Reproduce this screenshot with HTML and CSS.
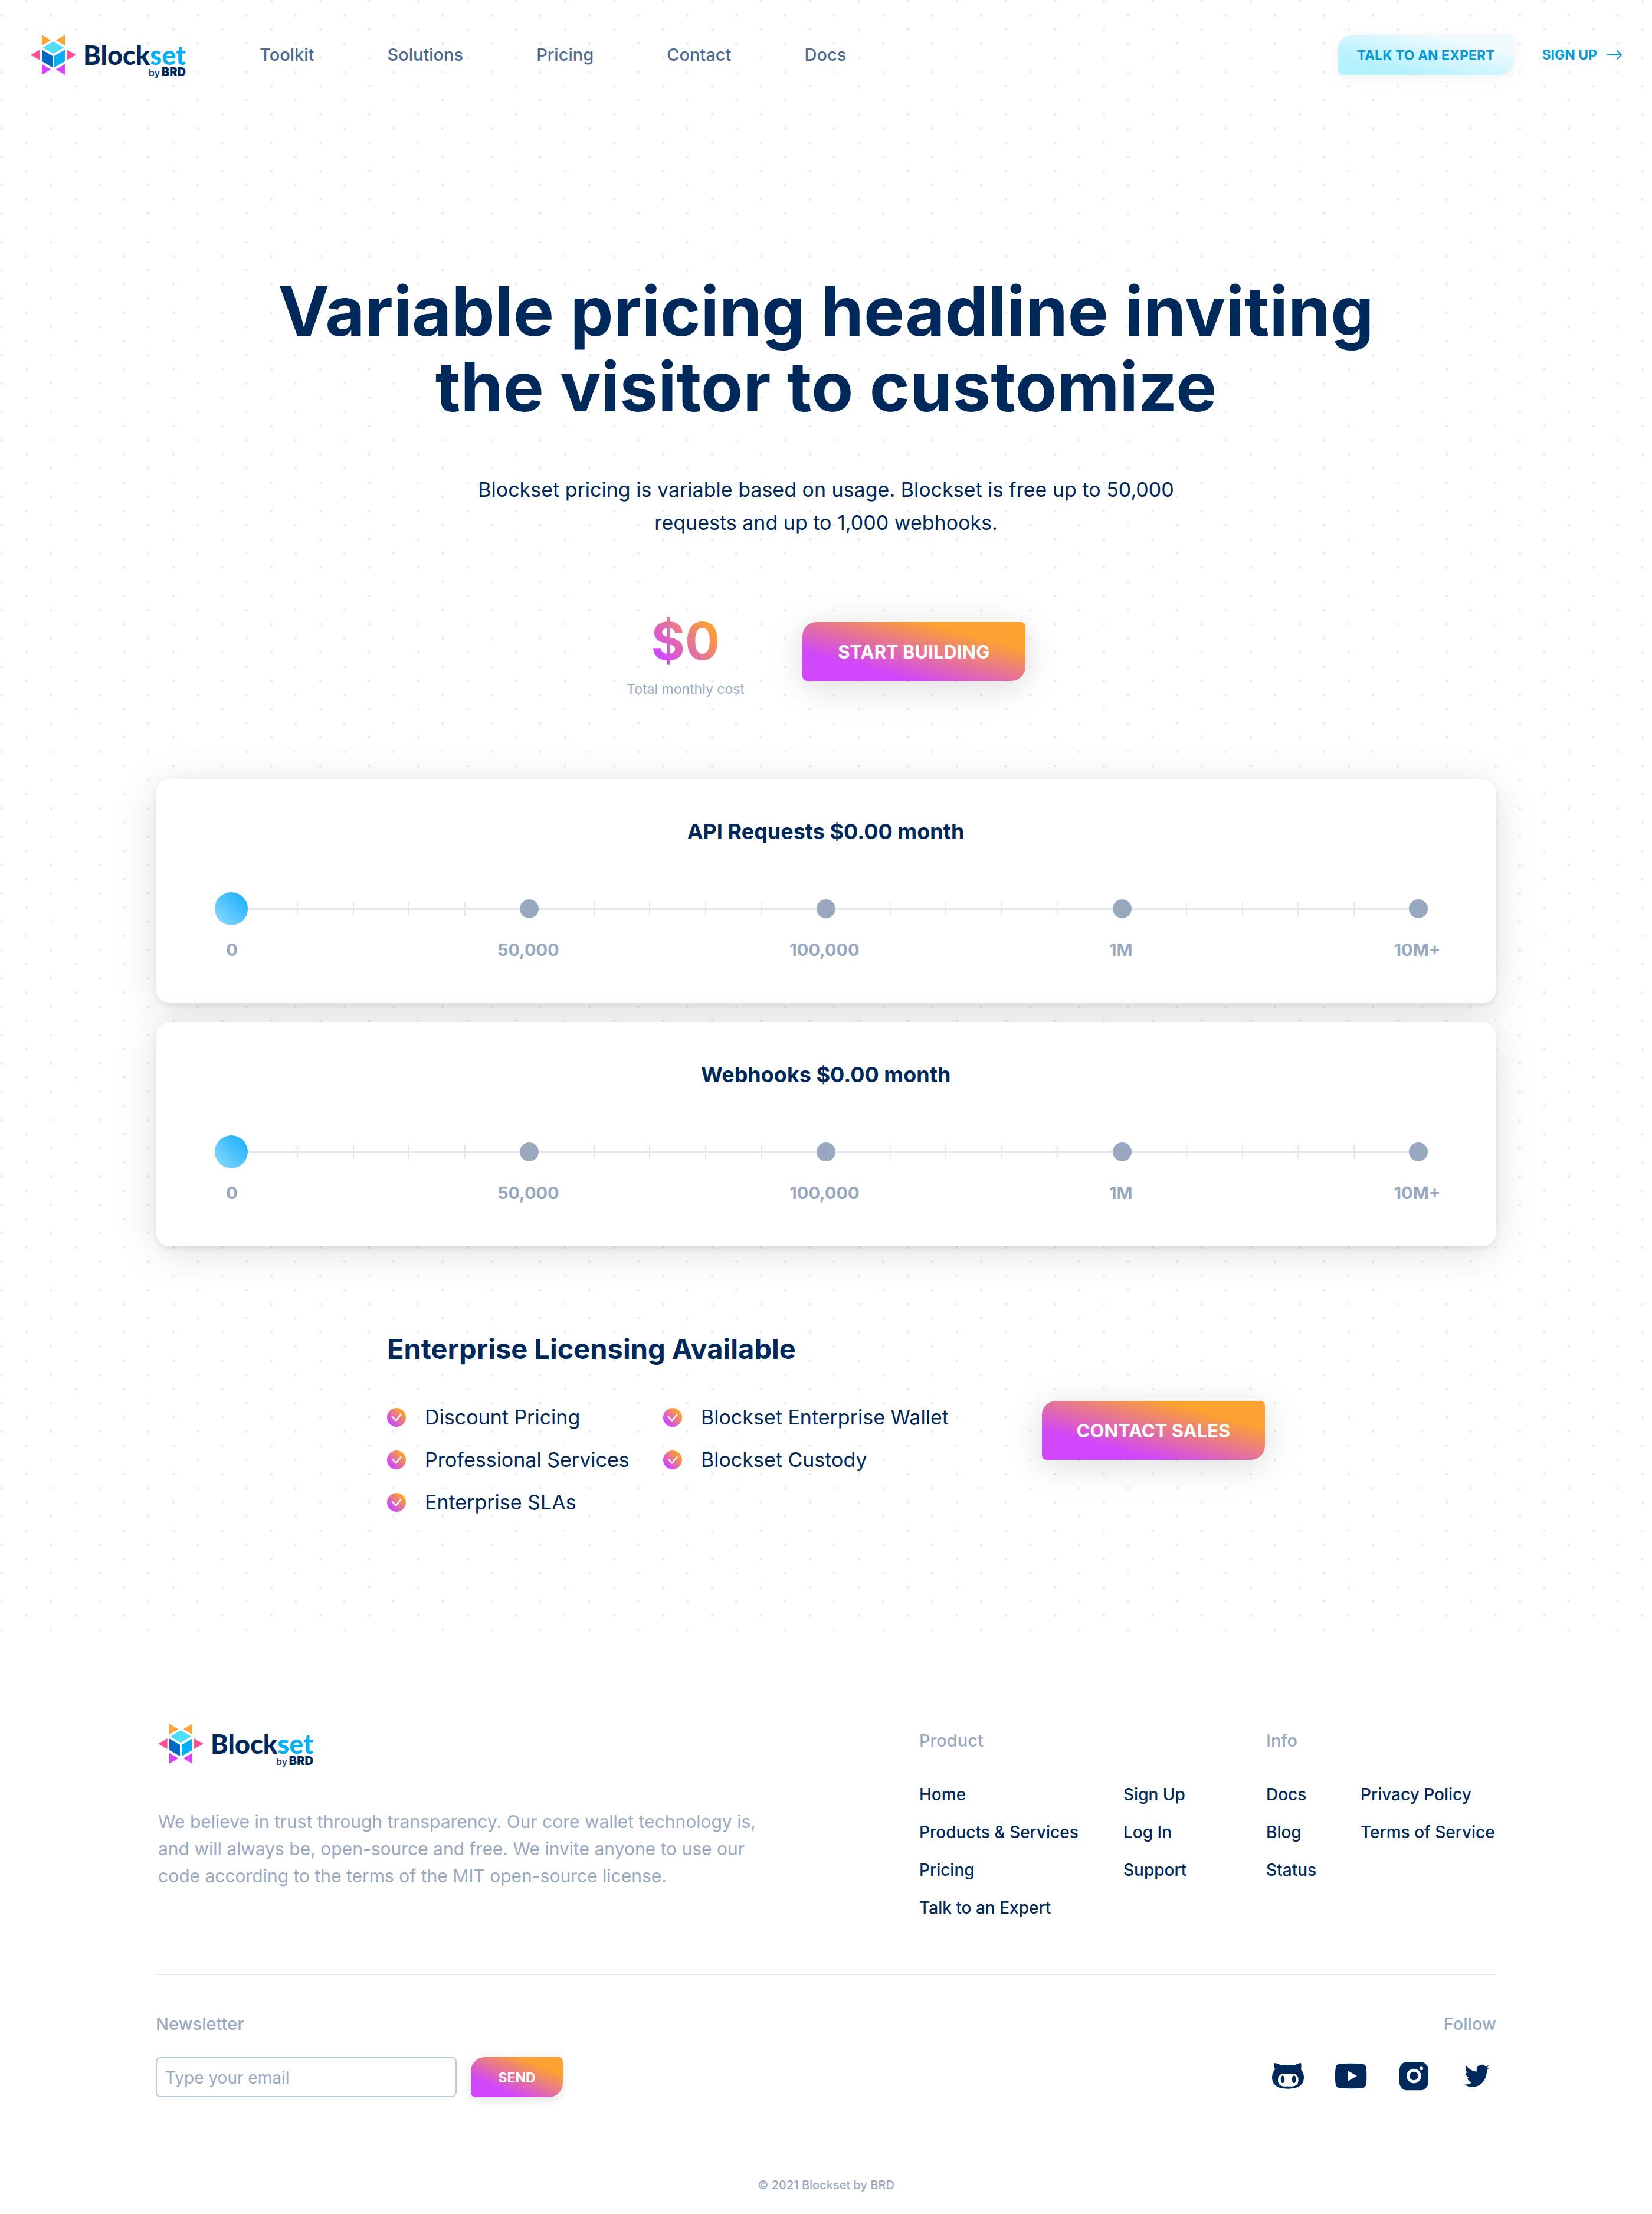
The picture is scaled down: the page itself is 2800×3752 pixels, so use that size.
FILE: index.html
```html
<!DOCTYPE html>
<html lang="en">
<head>
<meta charset="utf-8">
<meta name="viewport" content="width=device-width, initial-scale=1">
<title>Pricing – Blockset by BRD</title>
<link rel="stylesheet" href="styles.css">
</head>
<body>

<svg class="sprite" aria-hidden="true">
  <defs>
    <linearGradient id="warm" x1="0" y1="1" x2="1" y2="0">
      <stop offset=".2" stop-color="#d046fb"/>
      <stop offset=".8" stop-color="#fba231"/>
    </linearGradient>
    <symbol id="mark" viewBox="36 56 231 204">
      <path fill="#fba43a" d="M93 57v54l46-27zM210 57v54l-46-27z"/>
      <path fill="#ff5096" d="M36 158l47-27v54zM267 158l-48-27v54z"/>
      <path fill="#d744ff" d="M93 205v54l46-27zM210 205v54l-46-27z"/>
      <path fill="#4fdcf5" d="M151 90l53 31-53 31-53-31z"/>
      <path fill="#0068c2" d="M93 132l54 31v59l-54-32z"/>
      <path fill="#06aff4" d="M210 132l-54 31v59l54-32z"/>
    </symbol>
    <symbol id="check" viewBox="0 0 32 32">
      <circle cx="16" cy="16" r="16" fill="url(#warm)"/>
      <path d="M9 15l6 6.500 8.500-10.500" fill="none" stroke="#fff" stroke-width="2.500" stroke-linecap="round" stroke-linejoin="round"/>
    </symbol>
  </defs>
</svg>

<div class="canvas">
  <header class="header">
    <a class="logo" href="#" aria-label="Blockset by BRD">
      <svg class="logo-mark" aria-hidden="true"><use href="#mark"/></svg>
      <span class="logo-text">
        <span class="logo-name">Block<span class="logo-accent">set</span></span>
        <span class="logo-by">by<b>BRD</b></span>
      </span>
    </a>
    <nav class="nav" aria-label="Main">
      <a href="#">Toolkit</a>
      <a href="#">Solutions</a>
      <a href="#">Pricing</a>
      <a href="#">Contact</a>
      <a href="#">Docs</a>
    </nav>
    <div class="actions">
      <button class="button button-small button-cool" type="button">TALK TO AN EXPERT</button>
      <a class="signup" href="#">SIGN UP
        <svg class="arrow" viewBox="0 0 26 16" aria-hidden="true"><path d="M1 8h24M18 1l7 7-7 7"/></svg>
      </a>
    </div>
  </header>

  <main>
    <section class="hero">
      <h1>Variable pricing headline inviting the visitor to customize</h1>
      <p class="lead">Blockset pricing is variable based on usage. Blockset is free up to 50,000 requests and up to 1,000 webhooks.</p>
      <div class="quote">
        <div class="total">
          <span class="amount">$0</span>
          <span class="caption">Total monthly cost</span>
        </div>
        <button class="button" type="button">START BUILDING</button>
      </div>
    </section>

    <section class="meters">
      <div class="card">
        <label class="card-title" for="requests">API Requests $0.00 month</label>
        <div class="track">
          <i class="dot"></i><span class="ticks"><i></i><i></i><i></i><i></i></span>
          <i class="dot"></i><span class="ticks"><i></i><i></i><i></i><i></i></span>
          <i class="dot"></i><span class="ticks"><i></i><i></i><i></i><i></i></span>
          <i class="dot"></i><span class="ticks"><i></i><i></i><i></i><i></i></span>
          <i class="dot"></i>
          <input class="range" id="requests" type="range" min="0" max="20" value="0">
        </div>
        <ol class="scale"><li>0</li><li>50,000</li><li>100,000</li><li>1M</li><li>10M+</li></ol>
      </div>
      <div class="card">
        <label class="card-title" for="webhooks">Webhooks $0.00 month</label>
        <div class="track">
          <i class="dot"></i><span class="ticks"><i></i><i></i><i></i><i></i></span>
          <i class="dot"></i><span class="ticks"><i></i><i></i><i></i><i></i></span>
          <i class="dot"></i><span class="ticks"><i></i><i></i><i></i><i></i></span>
          <i class="dot"></i><span class="ticks"><i></i><i></i><i></i><i></i></span>
          <i class="dot"></i>
          <input class="range" id="webhooks" type="range" min="0" max="20" value="0">
        </div>
        <ol class="scale"><li>0</li><li>50,000</li><li>100,000</li><li>1M</li><li>10M+</li></ol>
      </div>
    </section>

    <section class="enterprise">
      <h2>Enterprise Licensing Available</h2>
      <div class="enterprise-row">
        <ul class="features">
          <li><svg aria-hidden="true"><use href="#check"/></svg>Discount Pricing</li>
          <li><svg aria-hidden="true"><use href="#check"/></svg>Professional Services</li>
          <li><svg aria-hidden="true"><use href="#check"/></svg>Enterprise SLAs</li>
        </ul>
        <ul class="features">
          <li><svg aria-hidden="true"><use href="#check"/></svg>Blockset Enterprise Wallet</li>
          <li><svg aria-hidden="true"><use href="#check"/></svg>Blockset Custody</li>
        </ul>
        <button class="button" type="button">CONTACT SALES</button>
      </div>
    </section>
  </main>
</div>

<footer class="footer">
  <div class="footer-top">
    <div class="about">
      <a class="logo" href="#" aria-label="Blockset by BRD">
        <svg class="logo-mark" aria-hidden="true"><use href="#mark"/></svg>
        <span class="logo-text">
          <span class="logo-name">Block<span class="logo-accent">set</span></span>
          <span class="logo-by">by<b>BRD</b></span>
        </span>
      </a>
      <p>We believe in trust through transparency. Our core wallet technology is, and will always be, open-source and free. We invite anyone to use our code according to the terms of the MIT open-source license.</p>
    </div>
    <nav class="links links-product" aria-label="Product">
      <h3>Product</h3>
      <ul>
        <li><a href="#">Home</a></li>
        <li><a href="#">Products &amp; Services</a></li>
        <li><a href="#">Pricing</a></li>
        <li><a href="#">Talk to an Expert</a></li>
      </ul>
      <ul>
        <li><a href="#">Sign Up</a></li>
        <li><a href="#">Log In</a></li>
        <li><a href="#">Support</a></li>
      </ul>
    </nav>
    <nav class="links links-info" aria-label="Info">
      <h3>Info</h3>
      <ul>
        <li><a href="#">Docs</a></li>
        <li><a href="#">Blog</a></li>
        <li><a href="#">Status</a></li>
      </ul>
      <ul>
        <li><a href="#">Privacy Policy</a></li>
        <li><a href="#">Terms of Service</a></li>
      </ul>
    </nav>
  </div>

  <div class="footer-bottom">
    <form class="newsletter">
      <label class="small-title" for="email">Newsletter</label>
      <div class="newsletter-row">
        <input class="email" id="email" type="email" placeholder="Type your email">
        <button class="button button-small button-send" type="button">SEND</button>
      </div>
    </form>
    <div class="follow">
      <h3 class="small-title">Follow</h3>
      <div class="social">
        <a href="#" aria-label="GitHub"><svg viewBox="156 264 192 192">
          <path d="M184 288C195 289 209 294 220 301C240 296 264 296 283 301C294 294 307 289 318 288C320 298 321 308 318 320C328 332 333 345 333 360C333 400 305 419 252 419C199 419 171 400 171 360C171 345 176 332 186 320C182 308 181 298 184 288Z"/>
          <rect class="knock" x="201" y="342" width="104" height="65" rx="29"/>
          <ellipse cx="225" cy="371" rx="10" ry="19"/><ellipse cx="283" cy="371" rx="11" ry="19"/>
        </svg></a>
        <a href="#" aria-label="YouTube"><svg viewBox="477 264 192 192">
          <path d="M572 290Q606 290 632 293Q648 296 650 314Q654 354 650 394Q648 412 632 415Q572 421 512 415Q496 412 494 394Q489 354 494 314Q496 296 512 293Q540 290 572 290Z"/>
          <path class="knock" d="M556 327l47 27-47 27z"/>
        </svg></a>
        <a href="#" aria-label="Instagram"><svg viewBox="798 264 192 192">
          <rect x="819" y="282" width="146" height="145" rx="40"/>
          <circle class="knock" cx="892" cy="354" r="37"/><circle cx="892" cy="354" r="22"/>
          <circle class="knock" cx="930" cy="316" r="9"/>
        </svg></a>
        <a href="#" aria-label="Twitter"><svg viewBox="1119 264 192 192">
          <path transform="translate(1150 283) scale(5.250 5.850)" d="M23.953 4.57a10 10 0 01-2.825.775 4.958 4.958 0 002.163-2.723c-.951.555-2.005.959-3.127 1.184a4.92 4.92 0 00-8.384 4.482C7.69 8.095 4.067 6.13 1.64 3.162a4.822 4.822 0 00-.666 2.475c0 1.71.87 3.213 2.188 4.096a4.904 4.904 0 01-2.228-.616v.06a4.923 4.923 0 003.946 4.827 4.996 4.996 0 01-2.212.085 4.936 4.936 0 004.604 3.417 9.867 9.867 0 01-6.102 2.105c-.39 0-.779-.023-1.17-.067a13.995 13.995 0 007.557 2.209c9.053 0 13.998-7.496 13.998-13.985 0-.21 0-.42-.015-.63A9.935 9.935 0 0024 4.59z"/>
        </svg></a>
      </div>
    </div>
  </div>

  <p class="copyright">© 2021 Blockset by BRD</p>
</footer>

</body>
</html>
```
FILE: styles.css
```css
:root {
  --navy: #00295b;
  --slate: #4d6b92;
  --muted: #98a9bf;
  --line: #e4e8ee;
  --blue: #0499d5;
  --purple: #d046fb;
  --orange: #fba231;
}

* { box-sizing: border-box; }

body {
  margin: 0;
  background: #fff;
  color: var(--navy);
  font-family: Inter, "Liberation Sans", sans-serif;
  font-size: 34px;
}

h1, h2, h3, p, ul, ol { margin: 0; padding: 0; }
ul, ol { list-style: none; }
a { color: inherit; text-decoration: none; }
.sprite { position: absolute; width: 0; height: 0; }

/* Staggered dot grid behind the header and main content */
.canvas {
  padding-bottom: 202px;
  background-image:
    radial-gradient(circle at center, var(--line) 1px, transparent 3px),
    radial-gradient(circle at center, var(--line) 1px, transparent 3px);
  background-size: 83px 48px;
  background-position: calc(50% - 27px) -22px, calc(50% + 14px) 2px;
}

/* Logo */
.logo { display: flex; flex: 0 0 264px; gap: 12px; height: 68px; }
.logo-mark { width: 77px; height: 68px; }
.logo-text { display: flex; flex-direction: column; align-items: flex-end; padding-top: 14px; }
.logo-name { font: 900 45px/40px Lato, sans-serif; }
.logo-accent { color: #06aff4; }
.logo-by { font-size: 16px; line-height: 18px; font-weight: 500; }
.logo-by b { font-size: 20px; font-weight: 900; margin-left: 3px; }

/* Header */
.header { display: flex; align-items: center; padding: 59px 51px 59px 52px; }
.nav { display: flex; gap: 124px; margin-left: 124px; color: var(--slate); font-size: 29px; font-weight: 500; line-height: 36px; }
.actions { display: flex; align-items: center; gap: 48px; margin-left: auto; }
.signup { display: flex; align-items: center; gap: 16px; color: var(--blue); font-size: 23px; font-weight: 700; line-height: 36px; }
.arrow { width: 26px; height: 16px; fill: none; stroke: currentColor; stroke-width: 2; stroke-linecap: round; stroke-linejoin: round; }

/* Buttons */
.button {
  width: 378px;
  height: 100px;
  padding: 2px 0 0;
  border: 0;
  border-radius: 24px 8px;
  background: linear-gradient(to top right, var(--purple) 25%, var(--orange) 77%);
  box-shadow: 0 10px 60px rgba(0, 0, 0, .14);
  color: #fff;
  font: 700 31px/40px Inter, sans-serif;
  cursor: pointer;
}
.button-small { height: 68px; font-size: 23px; line-height: 32px; }
.button-cool {
  width: 298px;
  background: linear-gradient(to top right, #b4f1fd 22%, #effaff 77%);
  box-shadow: 0 4px 24px rgba(0, 0, 0, .05);
  color: var(--blue);
}
.button-send { width: 156px; box-shadow: 0 4px 16px rgba(0, 0, 0, .12); }

/* Hero */
.hero { display: flex; flex-direction: column; align-items: center; padding-top: 277px; text-align: center; }
h1 { max-width: 1960px; font-size: 116px; font-weight: 700; line-height: 128px; }
.lead { max-width: 1240px; margin-top: 83px; line-height: 56px; }
.quote { display: flex; align-items: center; gap: 98px; margin-top: 112px; }
.total { display: flex; flex-direction: column; align-items: center; gap: 8px; }
.amount {
  background: linear-gradient(to top right, var(--purple) 20%, var(--orange) 80%);
  -webkit-background-clip: text;
  background-clip: text;
  color: transparent;
  font-size: 88px;
  font-weight: 700;
  line-height: 120px;
}
.caption { color: var(--muted); font-size: 23px; line-height: 28px; }

/* Usage cards */
.meters { display: flex; flex-direction: column; gap: 32px; max-width: 2272px; margin: 138px auto 0; }
.card {
  display: flex;
  flex-direction: column;
  padding: 67px 116px 74px 115px;
  border-radius: 24px;
  background: #fff;
  box-shadow: 0 4px 10px rgba(0, 0, 0, .08), 0 10px 70px rgba(0, 0, 0, .12);
}
.card-title { align-self: center; font-size: 36px; font-weight: 700; line-height: 44px; }
.track {
  position: relative;
  display: flex;
  align-items: center;
  height: 56px;
  margin-top: 81px;
  background: linear-gradient(var(--line), var(--line)) center / 100% 4px no-repeat;
}
.dot { flex: 0 0 32px; height: 32px; border-radius: 50%; background: var(--muted); }
.ticks { display: flex; flex: 1; justify-content: space-evenly; }
.ticks i { width: 2px; height: 24px; background: var(--line); }
.range {
  position: absolute;
  top: 0;
  left: -15px;
  width: calc(100% + 30px);
  height: 56px;
  margin: 0;
  background: none;
  -webkit-appearance: none;
  appearance: none;
}
.range::-webkit-slider-thumb {
  -webkit-appearance: none;
  width: 56px;
  height: 56px;
  border-radius: 50%;
  background: linear-gradient(to top right, #86d7fe 10%, #1bb0fb 90%);
}
.scale { display: flex; justify-content: space-between; margin: 26px -62px 0 -66px; color: var(--muted); font-size: 29px; font-weight: 700; line-height: 32px; text-align: center; }
.scale li { width: 160px; }

/* Enterprise */
.enterprise { max-width: 1488px; margin: 146px auto 0; }
h2 { font-size: 47px; font-weight: 700; line-height: 56px; }
.enterprise-row { display: grid; grid-template-columns: 468px 1fr 378px; align-items: start; margin-top: 60px; }
.features { display: flex; flex-direction: column; gap: 16px; line-height: 56px; }
.features li { display: flex; align-items: center; gap: 32px; }
.features svg { width: 32px; height: 32px; }

/* Footer */
.footer { max-width: 2272px; margin: 0 auto; padding: 145px 0 35px; }
.footer-top { display: flex; padding-bottom: 80px; border-bottom: 2px solid var(--line); }
.about { flex: 1; padding-left: 4px; }
.about p { max-width: 1050px; margin-top: 75px; color: var(--muted); font-size: 30px; line-height: 46px; }
.links { display: grid; grid-template-rows: 58px auto; row-gap: 30px; font-size: 28px; font-weight: 500; line-height: 64px; white-space: nowrap; }
.links h3 { grid-column: 1 / -1; color: var(--muted); font-size: 29px; font-weight: 500; line-height: 58px; }
.links-product { grid-template-columns: 346px 242px; }
.links-info { grid-template-columns: 160px 230px; }

.footer-bottom { display: flex; justify-content: space-between; padding-top: 65px; }
.newsletter, .follow { display: flex; flex-direction: column; gap: 38px; }
.small-title { color: var(--muted); font-size: 29px; font-weight: 500; line-height: 36px; }
.newsletter-row { display: flex; gap: 24px; }
.email { width: 510px; height: 68px; padding: 2px 14px 0; border: 2px solid #bcc8d8; border-radius: 8px; background: #fff; color: var(--navy); font: 400 28px/36px Inter, sans-serif; }
.email::placeholder { color: var(--muted); opacity: 1; }
.follow .small-title { text-align: right; }
.social { display: flex; align-items: center; gap: 43px; height: 68px; }
.social a { height: 64px; }
.social svg { display: block; width: 64px; height: 64px; fill: var(--navy); }
.social .knock { fill: #fff; }

.copyright { margin-top: 135px; color: var(--muted); font-size: 20px; font-weight: 500; line-height: 28px; text-align: center; }
```
